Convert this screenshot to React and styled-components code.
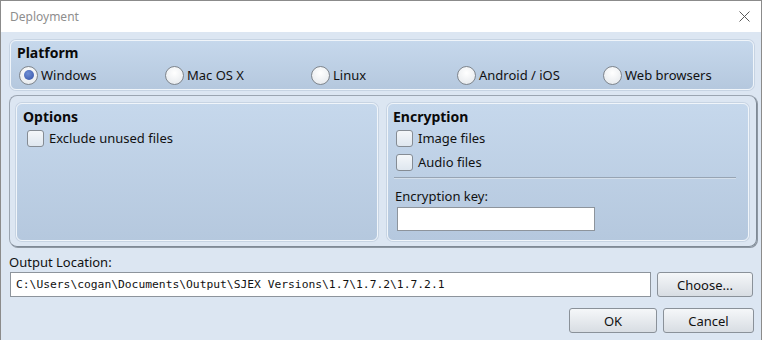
import styled, { createGlobalStyle } from 'styled-components';
import { useState } from 'react';

const Global = createGlobalStyle`
    html, body {
        margin: 0;
        padding: 0;
        background: #ffffff;
    }
    body {
        font-family: "Noto Sans", "Open Sans", sans-serif;
        font-size: 13px;
        color: #111;
    }
`

const Window = styled.div`
    width: 760px;
    height: 339px;
    border: 1px solid #8b8b8b;
    border-bottom: none;
    display: flex;
    flex-direction: column;
    background: #dce6f2;
`

const TitleBar = styled.div`
    height: 31px;
    background: #fff;
    display: flex;
    align-items: center;
    justify-content: space-between;
    padding: 0 10px 0 9px;
    color: #8e8e8e;
    font-size: 12px;
`

const Close = styled.svg`
    width: 11px;
    height: 11px;
    margin-right: 1px;
`

const Body = styled.div`
    flex: 1;
    display: flex;
    flex-direction: column;
    padding: 8px 4px 0 8px;
`

const Panel = styled.div`
    border: 1px solid #f0f5fa;
    border-radius: 6px;
    background: linear-gradient(#c6d8ec, #b5c8de);
    box-shadow: 0 0 0 1px rgba(160, 178, 200, 0.35);
    padding: ${p => p.pad || '4px 6px'};
    box-sizing: border-box;
`

const PlatformPanel = styled(Panel)`
    margin-left: 1px;
    width: 744px;
    height: 50px;
    padding-top: 3px;
`

const Heading = styled.div`
    font-weight: bold;
    font-size: 14px;
    line-height: 18px;
    color: #0a0a0a;
`

const RadioRow = styled.div`
    display: grid;
    grid-template-columns: repeat(5, 146px);
    margin-left: 2px;
    margin-top: 3px;
`

const Choice = styled.label`
    display: flex;
    align-items: center;
    gap: 3px;
    height: 20px;
    white-space: nowrap;
    cursor: pointer;
`

const RadioDot = styled.span`
    width: 17px;
    height: 17px;
    border-radius: 50%;
    border: 1px solid #7f858c;
    background: radial-gradient(circle at 50% 35%, #ffffff, #e2e6ea);
    display: flex;
    align-items: center;
    justify-content: center;
    flex-shrink: 0;
    &::after {
        content: '';
        width: 10px;
        height: 10px;
        border-radius: 50%;
        background: radial-gradient(circle at 40% 35%, #6f8fd6, #3552a6);
        display: ${p => (p.on ? 'block' : 'none')};
    }
`

const Group = styled.div`
    margin-top: 5px;
    width: 748px;
    height: 152px;
    box-sizing: border-box;
    border: 1px solid #9ba5b1;
    border-right-color: #7f8a96;
    border-bottom-color: #7f8a96;
    box-shadow: 1px 1px 0 #8d97a2;
    border-radius: 8px;
    padding: 7px 6px 5px 6px;
    display: grid;
    grid-template-columns: 362px 362px;
    gap: 9px;
`

const CheckBox = styled.span`
    width: 15px;
    height: 15px;
    border: 1px solid #858c94;
    border-radius: 3px;
    background: linear-gradient(#f4f7fa, #dfe7ef);
    flex-shrink: 0;
`

const CheckRow = styled(Choice)`
    height: 24px;
    gap: 5px;
    margin-left: ${p => p.indent || '3px'};
`

const Divider = styled.div`
    height: 1px;
    background: #97a4b3;
    border-bottom: 1px solid #d4dfeb;
    margin: 3px 2px 0 1px;
`

const KeyLabel = styled.div`
    margin: 8px 0 0 2px;
    line-height: 18px;
`

const Field = styled.input`
    box-sizing: border-box;
    height: ${p => p.h || '24px'};
    width: ${p => p.w || '100%'};
    border: 1px solid #8d949c;
    background: #fff;
    outline: none;
    padding: 0 5px;
    font-family: "DejaVu Sans Mono", monospace;
    font-size: 11.3px;
    color: #111;
`

const OutLabel = styled.div`
    margin-top: 6px;
    line-height: 18px;
`

const OutRow = styled.div`
    display: flex;
    gap: 6px;
    margin-top: 1px;
    margin-left: 1px;
`

const Button = styled.button`
    box-sizing: border-box;
    height: 25px;
    width: ${p => p.w || '88px'};
    border: 1px solid #8a9199;
    border-radius: 3px;
    background: linear-gradient(#f5f7f9, #d8dde3);
    font-family: "Noto Sans", "Open Sans", sans-serif;
    font-size: 13px;
    color: #111;
    padding: 0;
    cursor: pointer;
`

const Footer = styled.div`
    display: flex;
    justify-content: flex-end;
    gap: 6px;
    margin-top: 11px;
    padding-right: 3px;
`

const platforms = ['Windows', 'Mac OS X', 'Linux', 'Android / iOS', 'Web browsers'];

const App = () => {
    const [platform, setPlatform] = useState('Windows');

    return (
        <Window>
            <Global />
            <TitleBar>
                <span>Deployment</span>
                <Close viewBox="0 0 11 11">
                    <path d="M0.5 0.5 L10.5 10.5 M10.5 0.5 L0.5 10.5" stroke="#5a5a5a" strokeWidth="1" fill="none" />
                </Close>
            </TitleBar>
            <Body>
                <PlatformPanel>
                    <Heading>Platform</Heading>
                    <RadioRow>
                        {platforms.map(p => (
                            <Choice key={p} onClick={() => setPlatform(p)}>
                                <RadioDot on={platform === p} />
                                {p}
                            </Choice>
                        ))}
                    </RadioRow>
                </PlatformPanel>
                <Group>
                    <Panel pad="4px 6px">
                        <Heading>Options</Heading>
                        <CheckRow indent="4px">
                            <CheckBox />
                            Exclude unused files
                        </CheckRow>
                    </Panel>
                    <Panel pad="4px 10px 4px 5px">
                        <Heading>Encryption</Heading>
                        <CheckRow>
                            <CheckBox />
                            Image files
                        </CheckRow>
                        <CheckRow>
                            <CheckBox />
                            Audio files
                        </CheckRow>
                        <Divider />
                        <KeyLabel>Encryption key:</KeyLabel>
                        <Field w="198px" style={{ marginLeft: 4, marginTop: 2 }} />
                    </Panel>
                </Group>
                <OutLabel>Output Location:</OutLabel>
                <OutRow>
                    <Field w="641px" h="25px" readOnly value="C:\Users\cogan\Documents\Output\SJEX Versions\1.7\1.7.2\1.7.2.1" />
                    <Button w="96px">Choose...</Button>
                </OutRow>
                <Footer>
                    <Button w="88px">OK</Button>
                    <Button w="91px">Cancel</Button>
                </Footer>
            </Body>
        </Window>
    )
}

export default App;
